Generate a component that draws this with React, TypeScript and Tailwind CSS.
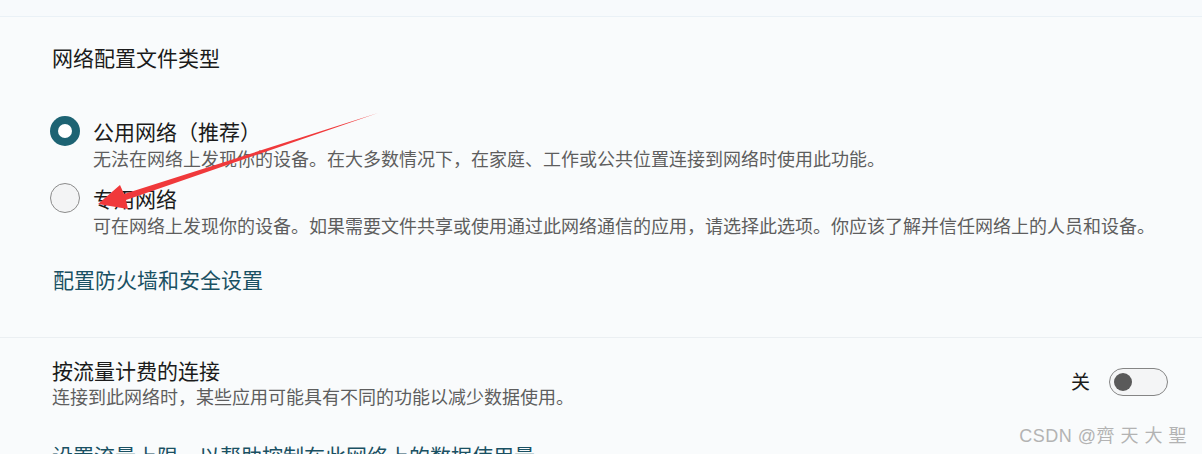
import React from "react";

const font = { fontFamily: '"Microsoft YaHei", "Noto Sans CJK SC", "Noto Sans", sans-serif' };

const options = [
  {
    title: "公用网络（推荐）",
    desc: "无法在网络上发现你的设备。在大多数情况下，在家庭、工作或公共位置连接到网络时使用此功能。",
    checked: true,
  },
  {
    title: "专用网络",
    desc: "可在网络上发现你的设备。如果需要文件共享或使用通过此网络通信的应用，请选择此选项。你应该了解并信任网络上的人员和设备。",
    checked: false,
  },
];

function Radio({ checked }: { checked: boolean }) {
  if (checked) {
    return (
      <span className="w-[30px] h-[30px] rounded-full bg-[#1d6373] flex items-center justify-center shrink-0">
        <span className="w-[14px] h-[14px] rounded-full bg-white" />
      </span>
    );
  }
  return <span className="w-[30px] h-[30px] rounded-full border border-[#8b8b8b] bg-[#f3f4f5] shrink-0" />;
}

export default function App() {
  return (
    <div className="relative w-[1202px] h-[454px] overflow-hidden bg-[#f9fbfc] text-[#1b1b1b]" style={font}>
      {/* card edge */}
      <div className="h-[17px] bg-[#f7fafc] border-b border-[#eaf1f6]" />

      {/* Network profile type */}
      <section className="pl-[52px] pt-[26px] pb-[44px] border-b border-[#ebeff2]">
        <h2 className="text-[21px] leading-[28px]">网络配置文件类型</h2>

        <div className="mt-[46px] flex flex-col gap-[13px] -ml-[2px]">
          {options.map((o, i) => (
            <div key={i} className="flex gap-[13px]">
              <div className="h-[28px] flex items-center">
                <Radio checked={o.checked} />
              </div>
              <div>
                <div className="text-[21px] leading-[28px]">{o.title}</div>
                <div className="text-[18px] leading-[26px] text-[#5e5e5e]">{o.desc}</div>
              </div>
            </div>
          ))}
        </div>

        <a className="block mt-[27px] ml-[1px] text-[21px] leading-[28px] text-[#1a5163]">配置防火墙和安全设置</a>
      </section>

      {/* Metered connection */}
      <section className="pl-[52px] pr-[34px] pt-[19px]">
        <div className="flex items-center justify-between">
          <div>
            <div className="text-[21px] leading-[26px]">按流量计费的连接</div>
            <div className="text-[18px] leading-[26px] text-[#5e5e5e]">连接到此网络时，某些应用可能具有不同的功能以减少数据使用。</div>
          </div>
          <div className="flex items-center gap-[19px] mt-[-3px]">
            <span className="text-[19px]">关</span>
            <span className="w-[59px] h-[28px] rounded-full border border-[#858585] bg-[#f4f5f6] flex items-center pl-[4px]">
              <span className="w-[18px] h-[18px] rounded-full bg-[#5a5a5a]" />
            </span>
          </div>
        </div>
        <a className="block mt-[32px] text-[21px] leading-[28px] text-[#1a5163]">设置流量上限，以帮助控制在此网络上的数据使用量</a>
      </section>

      {/* annotation arrow */}
      <svg className="absolute left-0 top-0 pointer-events-none" width="1202" height="454">
        <polygon
          points="378,113 124,194 120,185 98,204 128,209 126,200"
          fill="#f0393b"
        />
      </svg>

      {/* watermark */}
      <div
        className="absolute right-[15px] top-[423px] text-[18px] leading-[26px] tracking-[0.5px] text-[#b3b3b3]"
        style={{ fontFamily: '"Liberation Sans", "Noto Sans CJK SC", sans-serif' }}
      >
        CSDN @齊 天 大 聖
      </div>
    </div>
  );
}
